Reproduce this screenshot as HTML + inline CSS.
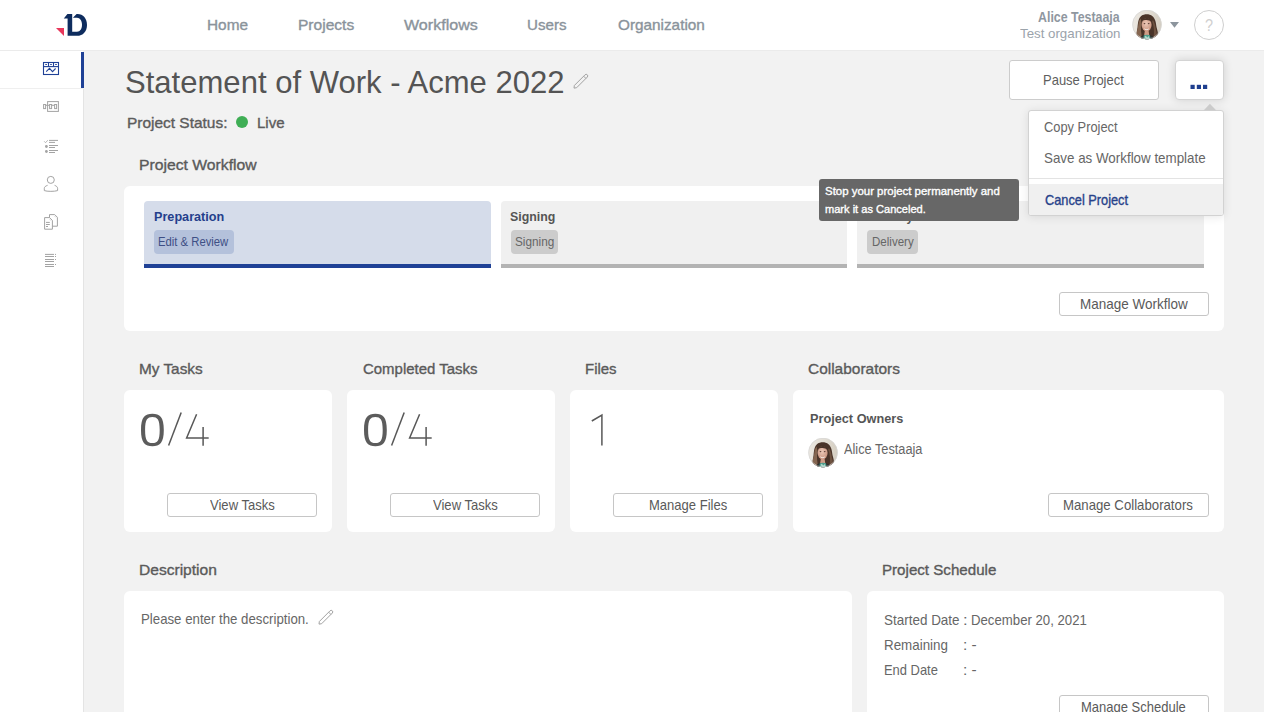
<!DOCTYPE html>
<html><head><meta charset="utf-8">
<style>
*{margin:0;padding:0;box-sizing:border-box}
html,body{width:1264px;height:712px;overflow:hidden;background:#f2f2f2;font-family:"Liberation Sans",sans-serif}
.a{position:absolute}
.t{position:absolute;white-space:nowrap;line-height:1;transform-origin:0 0}
.card{position:absolute;background:#fff;border-radius:6px}
.btn{position:absolute;background:#fff;border:1px solid #c6c6c6;border-radius:3px}
.stg{position:absolute;top:201px;height:67px;border-radius:4px 4px 0 0}
.bdg{position:absolute;top:230px;height:24px;border-radius:4px}
</style></head><body>
<div class="a" style="left:0;top:0;width:1264px;height:50px;background:#fff"></div>
<div class="a" style="left:0;top:50px;width:1264px;height:1px;background:#ebebeb"></div>
<div class="a" style="left:0;top:51px;width:83px;height:661px;background:#fff"></div>
<div class="a" style="left:83px;top:89px;width:1px;height:623px;background:#e4e4e4"></div>
<div class="a" style="left:0;top:88px;width:83px;height:1px;background:#efefef"></div>
<div class="a" style="left:81px;top:52px;width:3px;height:36px;background:#1f4196"></div>

<!-- avatar header -->
<svg class="a" style="left:1132.4px;top:10.1px" width="30" height="30" viewBox="0 0 30 30">
 <defs><clipPath id="cp1"><circle cx="15" cy="14.6" r="14.6"/></clipPath>
 <linearGradient id="cp1b" x1="0" y1="0" x2="1" y2="0"><stop offset="0" stop-color="#ece8e2"/><stop offset="0.6" stop-color="#e2ddd3"/><stop offset="1" stop-color="#d3ccbf"/></linearGradient>
 <radialGradient id="cp1f" cx="0.45" cy="0.4" r="0.65"><stop offset="0" stop-color="#ecc9b8"/><stop offset="1" stop-color="#c68f7a"/></radialGradient></defs>
 <g clip-path="url(#cp1)">
  <rect width="30" height="30" fill="url(#cp1b)"/>
  <path d="M5.5 30 C4 26 4.5 22 5.5 18 C6 12 6.5 8 9.5 5.8 C12.5 3.6 17.5 3.8 20.5 6.2 C23.5 8.8 24 13 24.5 17 C25.5 21 27 25 25 30 Z" fill="#4a3429"/>
  <path d="M5.5 30 C4.2 26 4.6 21 6 17 C6.5 13 7 10 8.5 8.5 L9.5 13 C8.5 18 9 24 10.5 30 Z" fill="#846550"/>
  <path d="M21 10 C23 13 23.5 17 24 20 C25 23 25.5 26 24 29 L21.5 28 C22.5 22 22 16 20.2 11.5 Z" fill="#6e5240"/>
  <ellipse cx="14.6" cy="14.8" rx="5" ry="6.6" fill="url(#cp1f)"/>
  <path d="M9.8 11 C11 8.2 14 7.6 16.5 8.3 C18.5 9 19.6 10.5 19.7 12 C18 10.2 15.5 9.6 13 10 C11.5 10.3 10.5 10.8 9.8 11 Z" fill="#4a3429"/>
  <ellipse cx="12.5" cy="13.6" rx="0.9" ry="0.55" fill="#5e4036"/><ellipse cx="16.7" cy="13.6" rx="0.9" ry="0.55" fill="#5e4036"/>
  <path d="M12 18 C13.3 19.6 15.9 19.6 17.2 18 L16.6 19.4 C15.4 20.5 13.8 20.5 12.6 19.4 Z" fill="#f3ebe6"/>
  <path d="M12.8 20.8 L16.6 20.8 L17.2 25 L12.2 25 Z" fill="#cf9c86"/>
  <path d="M8 30 L9 26.5 C11 24.6 18.5 24.6 20.8 26.5 L22 30 Z" fill="#2e3331"/>
  <path d="M11.3 30 L11.8 25.3 C13.4 24.4 16.4 24.4 18 25.3 L18.6 30 Z" fill="#4f9e8e"/>
  <path d="M12.3 27 L13.8 25.8 L15.3 27.4 L16.9 26.1 L17.5 28.6 L14.8 29.2 Z" fill="#b3dacd"/>
 </g>
 <circle cx="15" cy="14.6" r="14.4" fill="none" stroke="#d5d5d5" stroke-width="0.7"/>
</svg>
<svg class="a" style="left:1169px;top:21px" width="12" height="8" viewBox="0 0 12 8"><path d="M1 1 H10 L5.5 6.8 Z" fill="#8c959d"/></svg>
<div class="a" style="left:1194px;top:10px;width:30px;height:30px;border:1px solid #cfcfcf;border-radius:50%"></div>

<!-- pencil title -->
<svg class="a" style="left:566px;top:66px" width="30" height="30" viewBox="0 0 30 30"><path d="M8.37 19.47 L19.07 8.77 A1.6 1.6 0 0 1 21.33 11.03 L10.63 21.73 L8 22.1 Z M17.66 10.18 L19.92 12.44" fill="none" stroke="#a2a2a2" stroke-width="1" stroke-linejoin="round"/></svg>
<div class="a" style="left:236px;top:116px;width:12px;height:12px;border-radius:50%;background:#3fae55"></div>

<!-- pause button -->
<div class="btn" style="left:1009px;top:60px;width:150px;height:40px;border-color:#cccccc"></div>

<!-- workflow card -->
<div class="card" style="left:124px;top:186px;width:1100px;height:145px"></div>
<div class="stg" style="left:144px;width:347px;background:#d5dcea"></div>
<div class="a" style="left:144px;top:264px;width:347px;height:4px;background:#1f4196"></div>
<div class="bdg" style="left:154px;width:80px;background:#b4c1db"></div>
<div class="stg" style="left:501px;width:346px;background:#f0f0f0"></div>
<div class="a" style="left:501px;top:264px;width:346px;height:4px;background:#b3b3b3"></div>
<div class="bdg" style="left:511px;width:47px;background:#cccccc"></div>
<div class="stg" style="left:857px;width:347px;background:#f0f0f0"></div>
<div class="a" style="left:857px;top:264px;width:347px;height:4px;background:#b3b3b3"></div>
<div class="bdg" style="left:867px;width:51px;background:#cccccc"></div>
<div class="btn" style="left:1059px;top:292px;width:150px;height:24px"></div>

<!-- task cards -->
<div class="card" style="left:124px;top:390px;width:208px;height:142px"></div>
<div class="card" style="left:347px;top:390px;width:208px;height:142px"></div>
<div class="card" style="left:570px;top:390px;width:208px;height:142px"></div>
<div class="card" style="left:793px;top:390px;width:431px;height:142px"></div>
<div class="btn" style="left:167px;top:493px;width:150px;height:24px"></div>
<div class="btn" style="left:390px;top:493px;width:150px;height:24px"></div>
<div class="btn" style="left:613px;top:493px;width:150px;height:24px"></div>
<div class="btn" style="left:1048px;top:493px;width:161px;height:24px"></div>

<!-- digits -->
<svg class="a" style="left:0;top:400px" width="800" height="60" viewBox="0 400 800 60">
 <path fill-rule="evenodd" fill="#5c5c5c" stroke="none" d="M152.4 413.8 C145 413.8 141 417 141 430 C141 443 145 446.2 152.4 446.2 C159.8 446.2 163.8 443 163.8 430 C163.8 417 159.8 413.8 152.4 413.8 Z M152.4 416.9 C147.3 416.9 145.1 419.5 145.1 430 C145.1 440.5 147.3 443.1 152.4 443.1 C157.5 443.1 159.7 440.5 159.7 430 C159.7 419.5 157.5 416.9 152.4 416.9 Z"/>
 <path fill-rule="evenodd" fill="#5c5c5c" stroke="none" d="M375.4 413.8 C368 413.8 364 417 364 430 C364 443 368 446.2 375.4 446.2 C382.8 446.2 386.8 443 386.8 430 C386.8 417 382.8 413.8 375.4 413.8 Z M375.4 416.9 C370.3 416.9 368.1 419.5 368.1 430 C368.1 440.5 370.3 443.1 375.4 443.1 C380.5 443.1 382.7 440.5 382.7 430 C382.7 419.5 380.5 416.9 375.4 416.9 Z"/>
 <g fill="none" stroke="#585858" stroke-width="1.5">
  <path d="M168.6 445.6 L181.2 412.6"/>
  <path d="M196.6 414.2 L186.6 438 L208.7 438 M203.1 427.1 L203.1 445.8"/>
  <path d="M391.6 445.6 L404.2 412.6"/>
  <path d="M419.6 414.2 L409.6 438 L431.7 438 M426.1 427.1 L426.1 445.8"/>
  <path d="M591.8 421 L601.9 415 L601.9 445.6"/>
 </g>
</svg>

<!-- collab avatar -->
<svg class="a" style="left:808.4px;top:438.1px" width="30" height="30" viewBox="0 0 30 30">
 <defs><clipPath id="cp2"><circle cx="15" cy="14.6" r="14.6"/></clipPath>
 <linearGradient id="cp2b" x1="0" y1="0" x2="1" y2="0"><stop offset="0" stop-color="#ece8e2"/><stop offset="0.6" stop-color="#e2ddd3"/><stop offset="1" stop-color="#d3ccbf"/></linearGradient>
 <radialGradient id="cp2f" cx="0.45" cy="0.4" r="0.65"><stop offset="0" stop-color="#ecc9b8"/><stop offset="1" stop-color="#c68f7a"/></radialGradient></defs>
 <g clip-path="url(#cp2)">
  <rect width="30" height="30" fill="url(#cp2b)"/>
  <path d="M5.5 30 C4 26 4.5 22 5.5 18 C6 12 6.5 8 9.5 5.8 C12.5 3.6 17.5 3.8 20.5 6.2 C23.5 8.8 24 13 24.5 17 C25.5 21 27 25 25 30 Z" fill="#4a3429"/>
  <path d="M5.5 30 C4.2 26 4.6 21 6 17 C6.5 13 7 10 8.5 8.5 L9.5 13 C8.5 18 9 24 10.5 30 Z" fill="#846550"/>
  <path d="M21 10 C23 13 23.5 17 24 20 C25 23 25.5 26 24 29 L21.5 28 C22.5 22 22 16 20.2 11.5 Z" fill="#6e5240"/>
  <ellipse cx="14.6" cy="14.8" rx="5" ry="6.6" fill="url(#cp2f)"/>
  <path d="M9.8 11 C11 8.2 14 7.6 16.5 8.3 C18.5 9 19.6 10.5 19.7 12 C18 10.2 15.5 9.6 13 10 C11.5 10.3 10.5 10.8 9.8 11 Z" fill="#4a3429"/>
  <ellipse cx="12.5" cy="13.6" rx="0.9" ry="0.55" fill="#5e4036"/><ellipse cx="16.7" cy="13.6" rx="0.9" ry="0.55" fill="#5e4036"/>
  <path d="M12 18 C13.3 19.6 15.9 19.6 17.2 18 L16.6 19.4 C15.4 20.5 13.8 20.5 12.6 19.4 Z" fill="#f3ebe6"/>
  <path d="M12.8 20.8 L16.6 20.8 L17.2 25 L12.2 25 Z" fill="#cf9c86"/>
  <path d="M8 30 L9 26.5 C11 24.6 18.5 24.6 20.8 26.5 L22 30 Z" fill="#2e3331"/>
  <path d="M11.3 30 L11.8 25.3 C13.4 24.4 16.4 24.4 18 25.3 L18.6 30 Z" fill="#4f9e8e"/>
  <path d="M12.3 27 L13.8 25.8 L15.3 27.4 L16.9 26.1 L17.5 28.6 L14.8 29.2 Z" fill="#b3dacd"/>
 </g>
 <circle cx="15" cy="14.6" r="14.4" fill="none" stroke="#d5d5d5" stroke-width="0.7"/>
</svg>

<!-- description & schedule -->
<div class="card" style="left:124px;top:591px;width:728px;height:140px"></div>
<div class="card" style="left:867px;top:591px;width:357px;height:140px"></div>
<svg class="a" style="left:311.1px;top:602px" width="30" height="30" viewBox="0 0 30 30"><path d="M8.37 19.47 L19.07 8.77 A1.6 1.6 0 0 1 21.33 11.03 L10.63 21.73 L8 22.1 Z M17.66 10.18 L19.92 12.44" fill="none" stroke="#a2a2a2" stroke-width="1" stroke-linejoin="round"/></svg>
<div class="btn" style="left:1059px;top:695px;width:150px;height:30px"></div>

<svg class="a" style="left:0;top:0" width="90" height="290" viewBox="0 0 90 290">
 <path d="M56 28 L64 28 L64 36 Z" fill="#e8375b"/>
 <path d="M63.8 18.4 L67.4 14 L72.2 14 L72.2 35.8 L67.6 35.8 L67.6 18.4 Z M72.9 17.8 L76.6 14 L77.5 14 C83.2 14 87 18.5 87 24.9 C87 31.3 83 35.8 77 35.8 L72.2 35.8 L72.2 31.7 L77 31.7 C80.2 31.7 82 28.8 82 24.8 C82 20.8 80 17.8 77 17.8 Z" fill="#0e2c5e"/>
 <g fill="none" stroke="#1f4196" stroke-width="1.1">
  <rect x="43.5" y="62.5" width="15" height="12"/>
  <line x1="43.5" y1="66.6" x2="58.5" y2="66.6"/>
  <line x1="48.5" y1="62.5" x2="48.5" y2="66.6"/>
  <line x1="53.5" y1="62.5" x2="53.5" y2="66.6"/>
  <path d="M46.2 71.6 L49.5 68.4 L52.5 71.6 L55.6 68.5"/>
 </g>
 <g fill="#1f4196"><rect x="45.3" y="64" width="1.6" height="1"/><rect x="50.2" y="64" width="1.6" height="1"/><rect x="55.2" y="64" width="1.6" height="1"/></g>
 <g fill="none" stroke="#a3a3a3" stroke-width="1">
  <rect x="47.6" y="101.6" width="10.8" height="9.8"/>
  <rect x="43.6" y="104.5" width="2" height="4.1"/>
  <rect x="49.6" y="104.5" width="2" height="4.1"/>
  <rect x="54.6" y="104.5" width="2" height="4.1"/>
  <path d="M45.6 105.3 H49.6 M51.6 105.3 H54.6"/>
 </g>
 <g fill="none" stroke="#a3a3a3" stroke-width="1">
  <path d="M49 140.4 H58 M49 142.4 H55 M49 145.5 H58 M49 147.5 H55 M49 150.5 H58 M49 152.5 H55"/>
  <path d="M44.2 141.3 L45.5 142.7 L47.8 140.2" stroke-width="0.8"/>
 </g>
 <g fill="#a3a3a3"><circle cx="46.4" cy="146.5" r="1.4"/><circle cx="46.4" cy="151.5" r="1.4"/></g>
 <g fill="none" stroke="#a3a3a3" stroke-width="1">
  <circle cx="50.8" cy="179.9" r="3.5"/>
  <path d="M47.6 185.3 C45.5 186 44.3 187 44.3 188.3 L44.3 190.6 C47 191.6 54.6 191.6 57.6 190.6 L57.6 188.3 C57.6 187 56.4 186 54.6 185.3"/>
 </g>
 <g fill="none" stroke="#a3a3a3" stroke-width="1">
  <path d="M49.5 217.6 L44.6 217.6 L44.6 229.2 L52.4 229.2 L52.4 220.4 L49.5 217.6"/>
  <path d="M49.5 217.6 L49.5 214.6 L54.7 214.6 L57.4 217.3 L57.4 226.2 L52.4 226.2"/>
  <path d="M46 222.4 H49.8 M46 224.5 H49.8 M46 226.5 H48"/>
  <path d="M50 219.7 L50.6 220.3 M55 216.6 L55.6 217.2"/>
 </g>
 <g fill="none" stroke="#a3a3a3" stroke-width="1">
  <path d="M45 254.4 H54 M45 256.5 H54 M45 259.5 H54 M45 261.5 H54 M45 264.5 H54 M45 266.5 H54"/>
 </g>
 <g fill="#a3a3a3"><rect x="55" y="253.9" width="1" height="1"/><rect x="55" y="256" width="1" height="1"/><rect x="55" y="259" width="1" height="1"/><rect x="55" y="264" width="1" height="1"/></g>
</svg>

<div class="t" style="left:206.74px;top:18.00px;font-size:14.5px;font-weight:normal;color:#8a939b;transform:scaleX(1.0595);-webkit-text-stroke:0.35px #8a939b;">Home</div>
<div class="t" style="left:297.63px;top:18.00px;font-size:14.5px;font-weight:normal;color:#8a939b;transform:scaleX(1.0725);-webkit-text-stroke:0.35px #8a939b;">Projects</div>
<div class="t" style="left:404.40px;top:18.00px;font-size:14.5px;font-weight:normal;color:#8a939b;transform:scaleX(1.1076);-webkit-text-stroke:0.35px #8a939b;">Workflows</div>
<div class="t" style="left:527.36px;top:18.00px;font-size:14.5px;font-weight:normal;color:#8a939b;transform:scaleX(1.0432);-webkit-text-stroke:0.35px #8a939b;">Users</div>
<div class="t" style="left:617.80px;top:18.00px;font-size:14.5px;font-weight:normal;color:#8a939b;transform:scaleX(1.0561);-webkit-text-stroke:0.35px #8a939b;">Organization</div>
<div class="t" style="left:1037.70px;top:10.00px;font-size:14.2px;font-weight:bold;color:#8f979f;transform:scaleX(0.8723);">Alice Testaaja</div>
<div class="t" style="left:1019.50px;top:27.00px;font-size:13.4px;font-weight:normal;color:#9ba3ab;transform:scaleX(0.9921);">Test organization</div>
<div class="t" style="left:1204.62px;top:17.00px;font-size:16.5px;font-weight:normal;color:#d0d0d0;transform:scaleX(0.8750);">?</div>
<div class="t" style="left:125.13px;top:67.00px;font-size:31.5px;font-weight:normal;color:#545454;transform:scaleX(0.9857);">Statement of Work - Acme 2022</div>
<div class="t" style="left:126.93px;top:116.00px;font-size:14.5px;font-weight:normal;color:#5c5c5c;transform:scaleX(1.0652);-webkit-text-stroke:0.35px #5c5c5c;">Project Status:</div>
<div class="t" style="left:256.86px;top:116.00px;font-size:14.5px;font-weight:normal;color:#5c5c5c;transform:scaleX(1.0360);-webkit-text-stroke:0.35px #5c5c5c;">Live</div>
<div class="t" style="left:1042.99px;top:73.00px;font-size:14.3px;font-weight:normal;color:#5e5e5e;transform:scaleX(0.9080);">Pause Project</div>
<div class="t" style="left:138.65px;top:157.00px;font-size:15px;font-weight:normal;color:#5a5a5a;transform:scaleX(1.0482);-webkit-text-stroke:0.35px #5a5a5a;">Project Workflow</div>
<div class="t" style="left:153.59px;top:211.00px;font-size:12.5px;font-weight:bold;color:#243f8c;transform:scaleX(1.0118);">Preparation</div>
<div class="t" style="left:158.46px;top:236.00px;font-size:12px;font-weight:normal;color:#3e4f85;transform:scaleX(0.9405);">Edit &amp; Review</div>
<div class="t" style="left:510.21px;top:211.00px;font-size:12.5px;font-weight:bold;color:#555555;transform:scaleX(0.9886);">Signing</div>
<div class="t" style="left:514.72px;top:236.00px;font-size:12px;font-weight:normal;color:#666666;transform:scaleX(0.9816);">Signing</div>
<div class="t" style="left:866.55px;top:211.00px;font-size:12.5px;font-weight:bold;color:#555555;transform:scaleX(0.9479);">Delivery</div>
<div class="t" style="left:871.74px;top:236.00px;font-size:12px;font-weight:normal;color:#666666;transform:scaleX(0.9619);">Delivery</div>
<div class="t" style="left:1079.85px;top:297.00px;font-size:14.2px;font-weight:normal;color:#5a5a5a;transform:scaleX(0.9500);">Manage Workflow</div>
<div class="t" style="left:138.58px;top:361.00px;font-size:15px;font-weight:normal;color:#5a5a5a;transform:scaleX(1.0230);-webkit-text-stroke:0.35px #5a5a5a;">My Tasks</div>
<div class="t" style="left:362.60px;top:361.00px;font-size:15px;font-weight:normal;color:#5a5a5a;transform:scaleX(0.9974);-webkit-text-stroke:0.35px #5a5a5a;">Completed Tasks</div>
<div class="t" style="left:584.60px;top:361.00px;font-size:15px;font-weight:normal;color:#5a5a5a;transform:scaleX(0.9968);-webkit-text-stroke:0.35px #5a5a5a;">Files</div>
<div class="t" style="left:808.00px;top:361.00px;font-size:15px;font-weight:normal;color:#5a5a5a;transform:scaleX(1.0303);-webkit-text-stroke:0.35px #5a5a5a;">Collaborators</div>
<div class="t" style="left:209.80px;top:498.00px;font-size:14.2px;font-weight:normal;color:#5a5a5a;transform:scaleX(0.9200);">View Tasks</div>
<div class="t" style="left:432.80px;top:498.00px;font-size:14.2px;font-weight:normal;color:#5a5a5a;transform:scaleX(0.9200);">View Tasks</div>
<div class="t" style="left:648.58px;top:498.00px;font-size:14.2px;font-weight:normal;color:#5a5a5a;transform:scaleX(0.9179);">Manage Files</div>
<div class="t" style="left:1063.47px;top:498.00px;font-size:14.2px;font-weight:normal;color:#5a5a5a;transform:scaleX(0.9304);">Manage Collaborators</div>
<div class="t" style="left:809.91px;top:413.00px;font-size:12.8px;font-weight:bold;color:#555555;transform:scaleX(0.9935);">Project Owners</div>
<div class="t" style="left:843.50px;top:443.00px;font-size:13.8px;font-weight:normal;color:#666666;transform:scaleX(0.9235);">Alice Testaaja</div>
<div class="t" style="left:138.56px;top:562.00px;font-size:15px;font-weight:normal;color:#5a5a5a;transform:scaleX(1.0378);-webkit-text-stroke:0.35px #5a5a5a;">Description</div>
<div class="t" style="left:140.87px;top:612.00px;font-size:14.2px;font-weight:normal;color:#666666;transform:scaleX(0.9331);">Please enter the description.</div>
<div class="t" style="left:881.59px;top:562.00px;font-size:15px;font-weight:normal;color:#5a5a5a;transform:scaleX(1.0080);-webkit-text-stroke:0.35px #5a5a5a;">Project Schedule</div>
<div class="t" style="left:884.26px;top:613.00px;font-size:14.4px;font-weight:normal;color:#666666;transform:scaleX(0.9354);">Started Date</div>
<div class="t" style="left:963.05px;top:613.00px;font-size:14.4px;font-weight:normal;color:#666666;transform:scaleX(1.1500);">:</div>
<div class="t" style="left:970.78px;top:613.00px;font-size:14.4px;font-weight:normal;color:#666666;transform:scaleX(0.9168);">December 20, 2021</div>
<div class="t" style="left:884.27px;top:638.00px;font-size:14.4px;font-weight:normal;color:#666666;transform:scaleX(0.9299);">Remaining</div>
<div class="t" style="left:963.13px;top:638.00px;font-size:14.4px;font-weight:normal;color:#666666;transform:scaleX(1.0727);">: -</div>
<div class="t" style="left:884.30px;top:663.00px;font-size:14.4px;font-weight:normal;color:#666666;transform:scaleX(0.8983);">End Date</div>
<div class="t" style="left:963.13px;top:663.00px;font-size:14.4px;font-weight:normal;color:#666666;transform:scaleX(1.0727);">: -</div>
<div class="t" style="left:1080.88px;top:700.00px;font-size:14.2px;font-weight:normal;color:#5a5a5a;transform:scaleX(0.9159);">Manage Schedule</div>
<!-- more button -->
<div class="a" style="left:1174.5px;top:60px;width:49.5px;height:40px;background:#fff;border:1px solid #d4d4d4;border-radius:4px;box-shadow:0 0 10px rgba(0,0,0,0.14)"></div>
<svg class="a" style="left:1188px;top:82px" width="22" height="10" viewBox="0 0 22 10">
 <g fill="#1f3f8f"><rect x="2.5" y="2.8" width="4.2" height="4.2"/><rect x="8.8" y="2.8" width="4.2" height="4.2"/><rect x="15" y="2.8" width="4.2" height="4.2"/></g>
</svg>
<!-- dropdown -->
<div class="a" style="left:1028px;top:110px;width:196px;height:106px;background:#fff;border:1px solid #d2d2d2;border-radius:3px;box-shadow:0 1px 10px rgba(0,0,0,0.10);overflow:hidden">
 <div class="a" style="left:0;top:67px;width:196px;height:1px;background:#e3e3e3"></div>
 <div class="a" style="left:0;top:73px;width:196px;height:33px;background:#f0f0f0"></div>
</div>
<svg class="a" style="left:1202px;top:103px" width="16" height="9" viewBox="0 0 16 9"><path d="M1.6 7.6 L7.9 0.8 L14.3 7.6 Z" fill="#cbcbcb"/></svg>

<div class="t" style="left:1044.09px;top:120.00px;font-size:14.2px;font-weight:normal;color:#666666;transform:scaleX(0.9062);">Copy Project</div>
<div class="t" style="left:1043.86px;top:151.00px;font-size:14.2px;font-weight:normal;color:#666666;transform:scaleX(0.9418);">Save as Workflow template</div>
<div class="t" style="left:1044.80px;top:193.00px;font-size:14.2px;font-weight:normal;color:#27428a;transform:scaleX(0.9000);-webkit-text-stroke:0.35px #27428a;">Cancel Project</div>
<div class="a" style="left:819px;top:179px;width:200px;height:42px;background:#676767;border-radius:3px"></div>
<div class="t" style="left:825.30px;top:186.00px;font-size:11.3px;font-weight:normal;color:#ffffff;transform:scaleX(1.0122);-webkit-text-stroke:0.35px #ffffff;">Stop your project permanently and</div>
<div class="t" style="left:825.30px;top:204.00px;font-size:11.3px;font-weight:normal;color:#ffffff;transform:scaleX(0.9794);-webkit-text-stroke:0.35px #ffffff;">mark it as Canceled.</div>
</body></html>
